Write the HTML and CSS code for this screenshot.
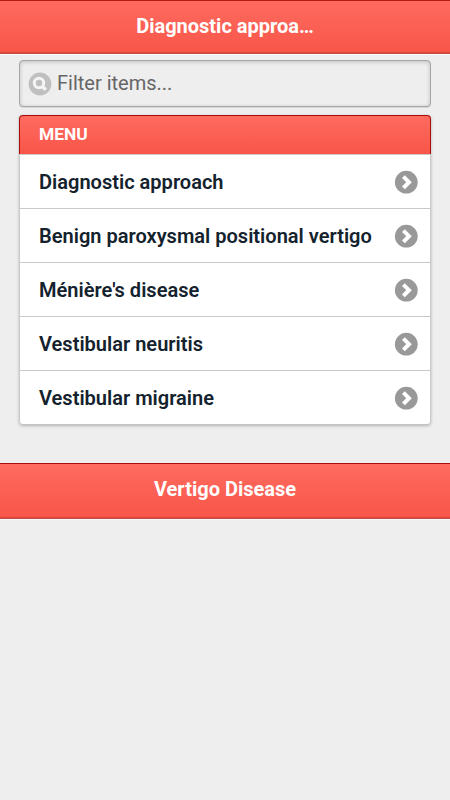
FILE: index.html
```html
<!DOCTYPE html>
<html lang="en">
<head>
<meta charset="utf-8">
<meta name="viewport" content="width=device-width, initial-scale=1">
<title>Diagnostic approach</title>
<link rel="stylesheet" href="styles.css">
</head>
<body>
<svg class="defs" width="0" height="0" aria-hidden="true">
  <symbol id="chevron" viewBox="0 0 24 24">
    <circle cx="12.3" cy="12.2" r="11.4" fill="#999"/>
    <path d="M9.4 6.6 15 12.2 9.4 17.8" fill="none" stroke="#fff" stroke-width="4"/>
  </symbol>
</svg>
<header class="bar header"><h1 class="bar-title">Diagnostic approa…</h1></header>
<main class="content">
  <form class="search">
    <svg class="search-icon" viewBox="0 0 24 24" aria-hidden="true">
      <circle cx="12" cy="12" r="11.4" fill="#bfbfbf"/>
      <circle cx="11" cy="11" r="4.7" fill="none" stroke="#f4f4f4" stroke-width="3"/>
      <path d="m14.2 14.2 3.6 3.6" stroke="#f4f4f4" stroke-width="3.4"/>
    </svg>
    <input class="search-input" type="text" placeholder="Filter items..." aria-label="Filter items">
  </form>
  <ul class="list">
    <li class="divider">MENU</li>
    <li class="row"><a class="link">Diagnostic approach</a><svg class="icon"><use href="#chevron"/></svg></li>
    <li class="row"><a class="link">Benign paroxysmal positional vertigo</a><svg class="icon"><use href="#chevron"/></svg></li>
    <li class="row"><a class="link">Ménière's disease</a><svg class="icon"><use href="#chevron"/></svg></li>
    <li class="row"><a class="link">Vestibular neuritis</a><svg class="icon"><use href="#chevron"/></svg></li>
    <li class="row"><a class="link">Vestibular migraine</a><svg class="icon"><use href="#chevron"/></svg></li>
  </ul>
</main>
<footer class="bar footer"><h2 class="bar-title">Vertigo Disease</h2></footer>
</body>
</html>
```
FILE: styles.css
```css
* { box-sizing: border-box; }
body {
  margin: 0;
  min-height: 800px;
  background: #eee;
  font-family: Roboto, "Liberation Sans", sans-serif;
  font-size: 20px;
  color: #14222d;
}
.defs { display: block; }
.bar {
  display: flex;
  justify-content: center;
  height: 54px;
  padding-top: 13px;
  border-top: 1px solid #b51c12;
  border-bottom: 1px solid #c05048;
  background: linear-gradient(#ff6b60, #f85548);
  box-shadow: inset 0 -1px #e04437, 0 1px #f8f8f8;
  color: #fff;
}
.bar-title {
  margin: 0;
  font-size: 20px;
  line-height: 24px;
  font-weight: 700;
  white-space: nowrap;
}
.content { padding: 6px 19px 0; }
.search {
  display: flex;
  align-items: center;
  height: 47px;
  padding-left: 8px;
  border: 1px solid #a5a5a5;
  border-radius: 4px;
  background: #eee;
  box-shadow: inset 0 1px 4px rgba(0, 0, 0, .2), 0 1px #d8d8d8;
}
.search-icon { width: 24px; height: 24px; }
.search-input {
  flex: 1;
  min-width: 0;
  height: 40px;
  padding: 0 5px 1px;
  border: 0;
  background: none;
  font: 400 20px Roboto, sans-serif;
}
.search-input::placeholder { color: #666; }
.list {
  margin: 8px 0 0;
  padding: 0;
  list-style: none;
  border-radius: 4px;
  box-shadow: 0 1px 3px rgba(0, 0, 0, .25);
}
.divider {
  height: 39px;
  padding: 7px 19px 0;
  border: 1px solid #a90d08;
  border-bottom: 0;
  border-radius: 4px 4px 0 0;
  background: linear-gradient(#ff6b60, #f85548);
  color: #fff;
  font-size: 17.4px;
  line-height: 22px;
  font-weight: 700;
}
.row {
  display: flex;
  align-items: center;
  height: 54.1px;
  padding: 0 12px 0 19px;
  border: 1px solid #c9c9c9;
  border-bottom: 0;
  background: #fff;
}
.row:last-child {
  height: 54.6px;
  border-bottom: 1px solid #c4c4c4;
  border-radius: 0 0 4px 4px;
}
.link {
  flex: 1;
  font-size: 20.05px;
  font-weight: 600;
  white-space: nowrap;
}
.icon { width: 24px; height: 24px; }
.footer { height: 56px; margin-top: 38px; border-top-color: #a90d08; }
```
